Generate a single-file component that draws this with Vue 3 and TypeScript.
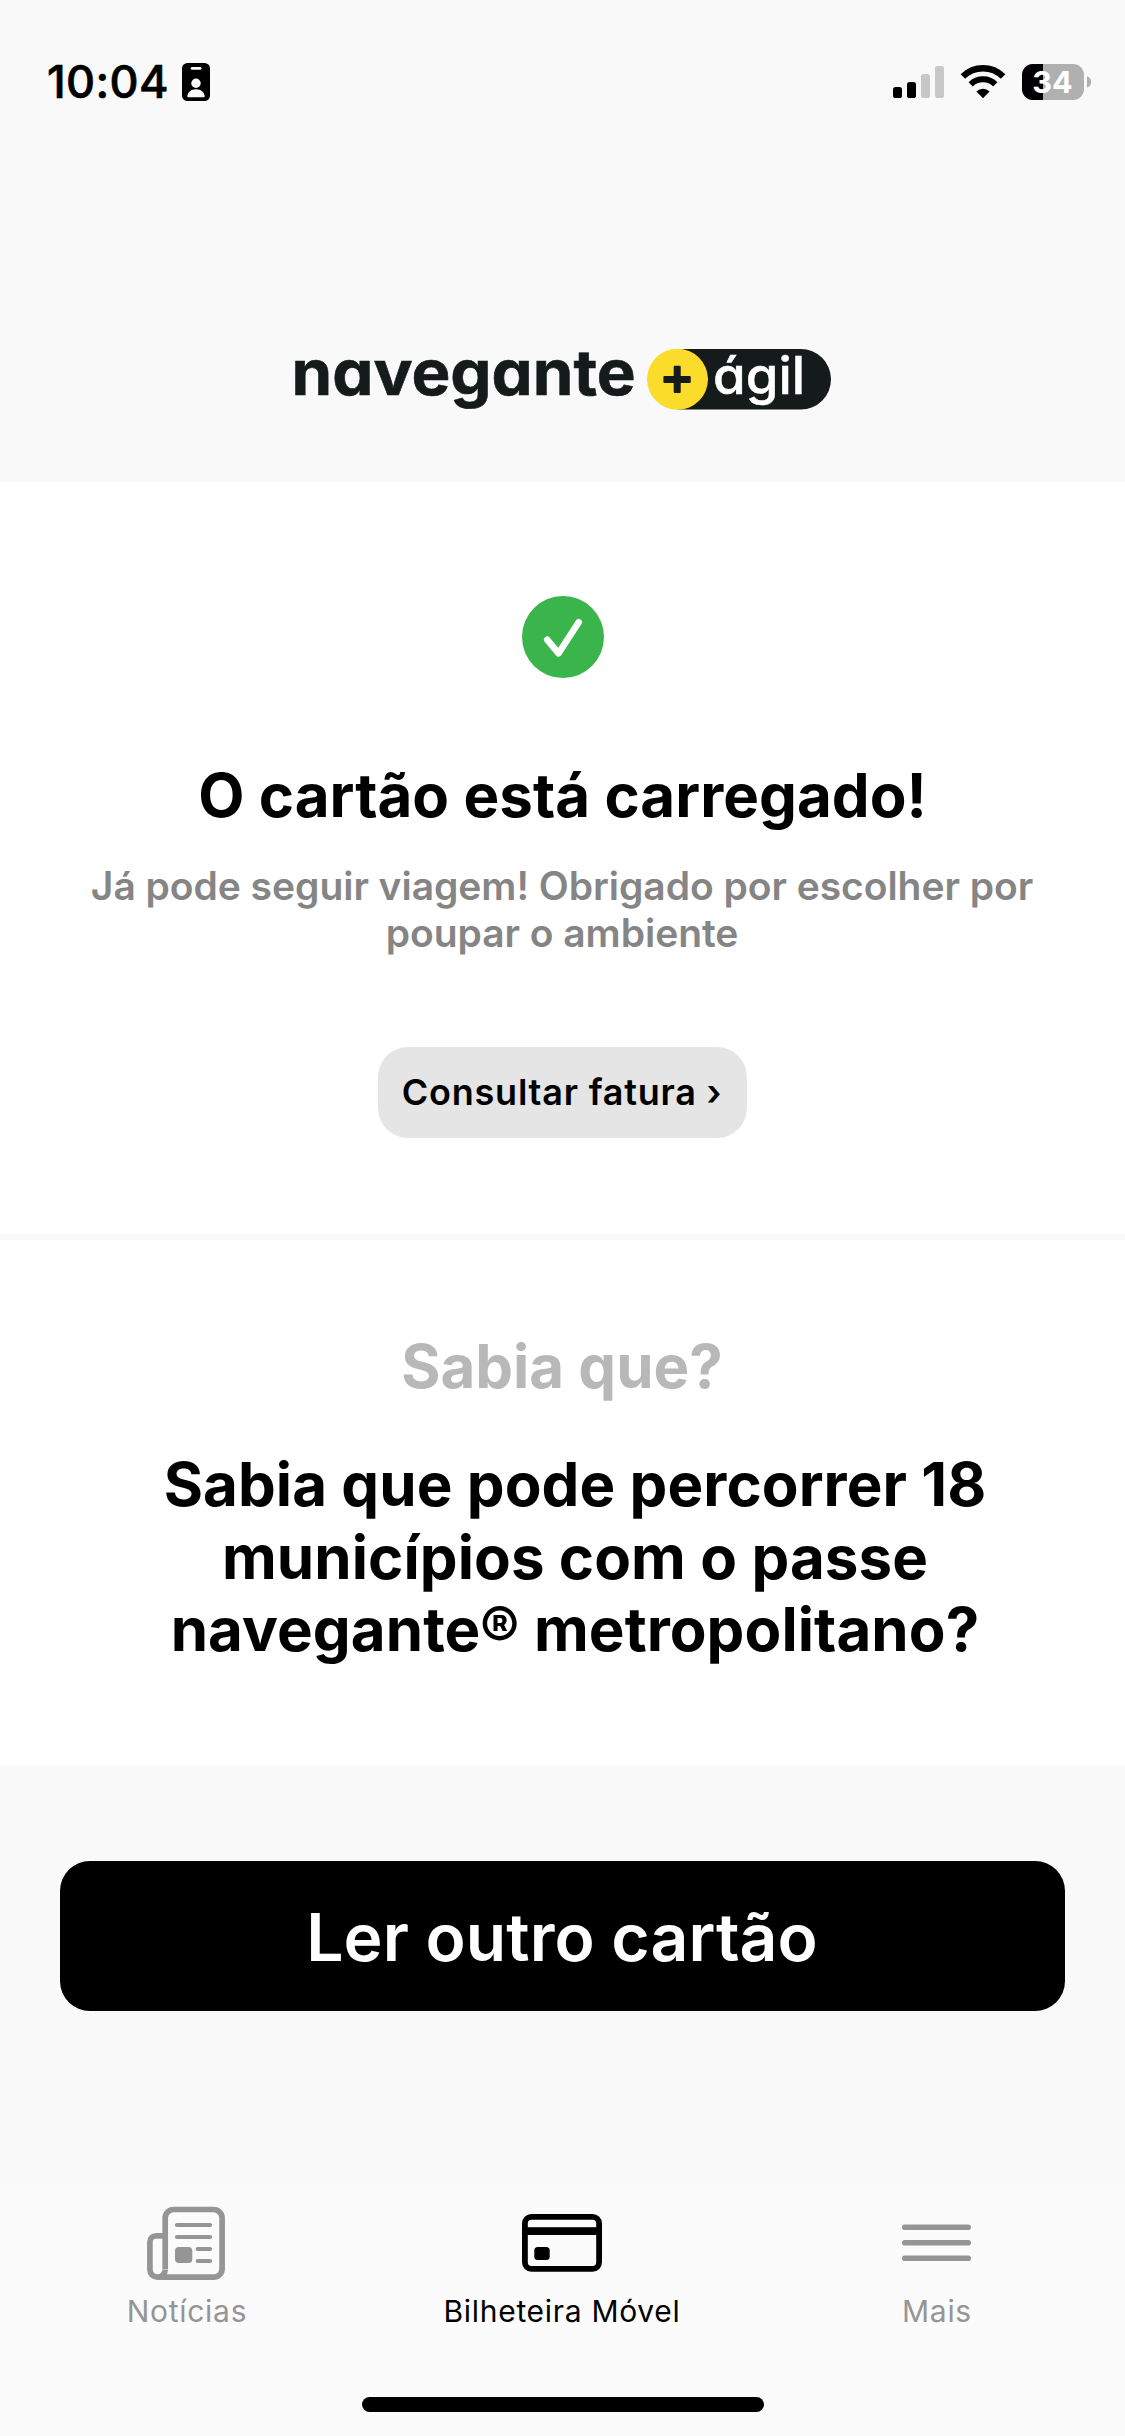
<script setup lang="ts">
interface Tab {
  id: 'news' | 'card' | 'more'
  label: string
}

const tabs: Tab[] = [
  { id: 'news', label: 'Notícias' },
  { id: 'card', label: 'Bilheteira Móvel' },
  { id: 'more', label: 'Mais' },
]
const activeTab: Tab['id'] = 'card'

const tip = ['Sabia que pode percorrer 18', 'municípios com o passe', 'navegante® metropolitano?']
</script>

<template>
  <div class="screen">
    <header class="header">
      <div class="status">
        <div class="status-left">
          <span class="time">10:04</span>
          <svg class="badge" width="28" height="38" viewBox="0 0 28 38">
            <rect width="28" height="38" rx="5.5" fill="#000" />
            <rect x="8.7" y="4" width="10.8" height="2.8" rx="1.4" fill="#f9f9f9" />
            <circle cx="14" cy="20.2" r="4.7" fill="#f9f9f9" />
            <path d="M5.3 33.6C5.6 29 9.2 26.3 14 26.3s8.4 2.7 8.7 7.3q0 .6-.7.6H6q-.7 0-.7-.6z" fill="#f9f9f9" />
          </svg>
        </div>
        <svg class="status-right" width="200" height="38" viewBox="892 63 200 38">
          <rect x="893" y="87" width="9" height="11" rx="2.6" />
          <rect x="907" y="82" width="9" height="16" rx="2.6" />
          <rect x="921" y="74" width="9" height="24" rx="2.6" fill="#c7c7c7" />
          <rect x="935" y="66" width="9" height="32" rx="2.6" fill="#c7c7c7" />
          <path d="M962.9 76.6a28.4 28.4 0 0 1 40.2 0" fill="none" stroke="#000" stroke-width="6.4" />
          <path d="M970.7 84.4a17.4 17.4 0 0 1 24.6 0" fill="none" stroke="#000" stroke-width="6" />
          <path d="M983 98.2l-6.6-6.6a9.2 9.2 0 0 1 13.2 0z" />
          <rect x="1022" y="64" width="62" height="36" rx="11" fill="#b0b0b0" />
          <path d="M1043 64h-10a11 11 0 0 0-11 11v14a11 11 0 0 0 11 11h10z" />
          <path d="M1087 76.2c2.7 1 4.2 3.2 4.2 5.8s-1.5 4.8-4.2 5.8z" fill="#b0b0b0" />
          <text class="battery" x="1052.4" y="93" text-anchor="middle">34</text>
        </svg>
      </div>
      <svg class="logo" width="561" height="90" viewBox="282 330 561 90">
        <text class="logo-name" x="291.6" y="395" textLength="344" lengthAdjust="spacingAndGlyphs">navegante</text>
        <path d="M677.5 349h123.2a30.3 30.3 0 0 1 0 60.6h-123.2z" fill="#151a1a" />
        <circle cx="677.5" cy="379.3" r="30.5" fill="#fbdc2a" />
        <path
          d="M674.7 365.7h5q1 0 1 1v9.2h9q1 0 1 1v5q0 1-1 1h-9v9.2q0 1-1 1h-5q-1 0-1-1v-9.2h-9.3q-1 0-1-1v-5q0-1 1-1h9.3v-9.2q0-1 1-1z"
          fill="#151a1a"
        />
        <text class="logo-tag" x="713" y="394.4" textLength="92" lengthAdjust="spacingAndGlyphs">ágil</text>
      </svg>
    </header>

    <section class="result">
      <svg class="check" width="82" height="82" viewBox="0 0 82 82">
        <circle cx="41" cy="41" r="41" fill="#3ab54c" />
        <path
          d="M25.3 43.8 36.6 57.3 56.7 26.2"
          fill="none"
          stroke="#fff"
          stroke-width="6.6"
          stroke-linecap="round"
          stroke-linejoin="round"
        />
      </svg>
      <h1 class="title">O cartão está carregado!</h1>
      <p class="subtitle">Já pode seguir viagem! Obrigado por escolher por<br />poupar o ambiente</p>
      <button class="invoice" type="button">Consultar fatura ›</button>
    </section>

    <section class="tip">
      <h2 class="tip-title">Sabia que?</h2>
      <p class="tip-text">
        <span v-for="line in tip" :key="line">{{ line }}</span>
      </p>
    </section>

    <button class="primary" type="button">Ler outro cartão</button>

    <nav class="tabs">
      <a v-for="tab in tabs" :key="tab.id" class="tab" :class="{ active: tab.id === activeTab }">
        <svg v-if="tab.id === 'news'" width="81" height="80" viewBox="0 0 81 80" fill="none" stroke="currentColor">
          <g stroke-width="5.7">
            <path d="M18.2 66V15a8.5 8.5 0 0 1 8.5-8.5h39.900a8.5 8.5 0 0 1 8.5 8.5v50.7a8.5 8.5 0 0 1-8.5 8.5H10.5" />
            <path d="M17 32.8H9a6.1 6.1 0 0 0-6.1 6.1V66.500a7.650 7.7 0 0 0 15.3 0" />
          </g>
          <g stroke-width="4.2" stroke-linecap="round">
            <path d="M30 22h33M30 34h33M50.700 46h12.300M50.700 58h12.300" />
          </g>
          <rect x="28" y="44" width="17.3" height="16" rx="4" fill="currentColor" stroke="none" />
        </svg>
        <svg v-else-if="tab.id === 'card'" width="81" height="80" viewBox="0 0 81 80">
          <rect x="2.9" y="13.9" width="74.2" height="51.9" rx="6.5" fill="none" stroke="currentColor" stroke-width="5.8" />
          <rect x="2.9" y="24.2" width="74.2" height="7.8" fill="currentColor" />
          <rect x="12.3" y="44" width="15.4" height="13" rx="3.5" fill="currentColor" />
        </svg>
        <svg v-else width="81" height="80" viewBox="0 0 81 80" fill="none" stroke="currentColor">
          <path d="M7.8 24.3h63.4M7.8 39.7h63.4M7.8 55.3h63.4" stroke-width="5.6" stroke-linecap="round" />
        </svg>
        <span class="tab-label">{{ tab.label }}</span>
      </a>
      <i class="home-indicator"></i>
    </nav>
  </div>
</template>

<style>
body {
  margin: 0;
}
</style>

<style scoped>
.screen {
  display: flex;
  flex-direction: column;
  box-sizing: border-box;
  width: 1125px;
  height: 2436px;
  overflow: hidden;
  background: #f9f9f9;
  color: #000;
  font-family: Inter, 'Liberation Sans', sans-serif;
}

h1,
h2,
p {
  margin: 0;
}

button {
  border: 0;
  padding: 0;
  font-family: inherit;
}

.header {
  display: flex;
  flex-direction: column;
  align-items: center;
  justify-content: space-between;
  flex: none;
  box-sizing: border-box;
  width: 1125px;
  height: 482px;
  padding: 63px 0 62px;
}

.status {
  display: flex;
  justify-content: space-between;
  align-items: flex-start;
  box-sizing: border-box;
  width: 100%;
  padding: 0 33px 0 47px;
}

.status-left {
  display: flex;
  align-items: center;
  gap: 14px;
}

.time {
  width: 121px;
  font-size: 45px;
  line-height: 38px;
  font-weight: 500;
  letter-spacing: 0.4px;
  white-space: nowrap;
  -webkit-text-stroke: 0.7px #000;
}

.battery {
  font-size: 30.5px;
  font-weight: 700;
  fill: #fff;
}

.logo-name,
.logo-tag {
  font-feature-settings: 'cv11';
}

.logo-name {
  font-size: 63px;
  font-weight: 700;
  fill: #151a1a;
  stroke: #151a1a;
  stroke-width: 0.6px;
}

.logo-tag {
  font-size: 51.5px;
  font-weight: 500;
  fill: #fff;
  stroke: #fff;
  stroke-width: 0.5px;
}

.result {
  display: flex;
  flex-direction: column;
  align-items: center;
  flex: none;
  box-sizing: border-box;
  height: 752px;
  padding-top: 114px;
  background: #fff;
}

.check {
  margin-left: 1px;
}

.title {
  margin-top: 81px;
  font-size: 60px;
  line-height: 72px;
  font-weight: 700;
  letter-spacing: 0.05px;
}

.subtitle {
  margin-top: 31px;
  margin-right: 1px;
  font-size: 39px;
  line-height: 47px;
  font-weight: 600;
  letter-spacing: -0.04px;
  text-align: center;
  white-space: nowrap;
  color: #858585;
}

.invoice {
  width: 369px;
  height: 91px;
  margin-top: 91px;
  padding-right: 1px;
  padding-bottom: 2px;
  border-radius: 30px;
  background: #e5e5e5;
  color: #000;
  font-size: 36px;
  font-weight: 600;
  letter-spacing: 0.78px;
  white-space: nowrap;
}

.tip {
  display: flex;
  flex-direction: column;
  align-items: center;
  flex: none;
  box-sizing: border-box;
  height: 525px;
  margin-top: 6px;
  padding-top: 90px;
  background: #fff;
}

.tip-title {
  margin-right: 1px;
  font-size: 60px;
  line-height: 72px;
  font-weight: 700;
  color: #b8b8b8;
}

.tip-text {
  display: flex;
  flex-direction: column;
  align-items: center;
  margin-top: 46px;
  padding-left: 25px;
  font-size: 60px;
  line-height: 72.5px;
  font-weight: 700;
  letter-spacing: 0.08px;
  white-space: nowrap;
}

.primary {
  flex: none;
  width: 1005px;
  height: 150px;
  margin: 96px auto 0;
  padding-right: 1px;
  padding-top: 1px;
  border-radius: 30px;
  background: #000;
  color: #fff;
  font-size: 66px;
  font-weight: 600;
  letter-spacing: 0.05px;
}

.tabs {
  position: relative;
  display: flex;
  box-sizing: border-box;
  height: 249px;
  margin-top: auto;
  padding-top: 16px;
  background: #fbfbfb;
}

.tab {
  display: flex;
  flex: 1;
  flex-direction: column;
  align-items: center;
  color: #959595;
}

.tab.active {
  color: #000;
}

.tab-label {
  margin-top: 10px;
  margin-right: 1px;
  font-size: 30px;
  line-height: 36px;
  letter-spacing: 0.7px;
  white-space: nowrap;
}

.home-indicator {
  position: absolute;
  bottom: 24px;
  left: 362px;
  width: 402px;
  height: 15px;
  border-radius: 8px;
  background: #000;
}
</style>
